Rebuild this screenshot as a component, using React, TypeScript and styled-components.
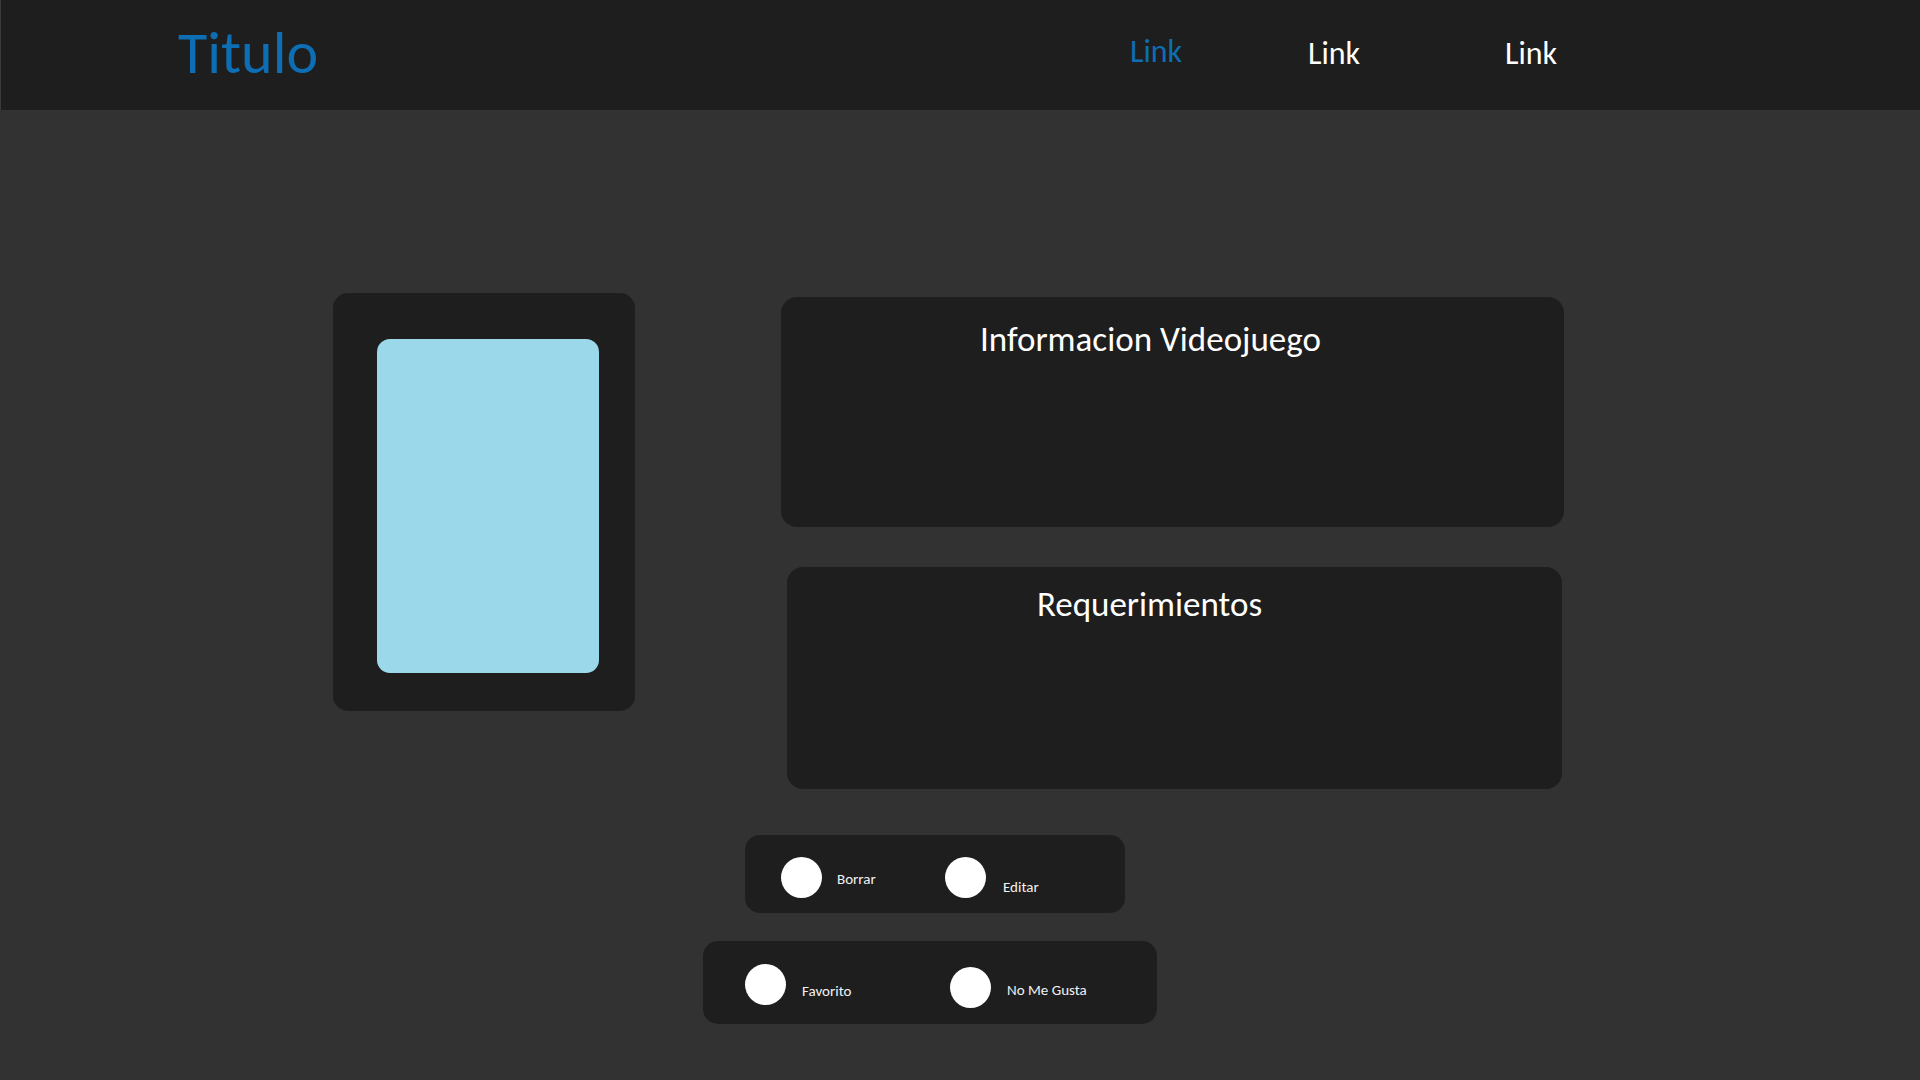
import { createGlobalStyle, styled } from "styled-components";

const GlobalStyle = createGlobalStyle`
  html, body {
    margin: 0;
    padding: 0;
    background-color: #323232;
  }
  body {
    font-family: Carlito, Lato, "Open Sans", sans-serif;
  }
`;

export default function App() {
  return (
    <>
      <GlobalStyle />
      <Page>
        <Header>
          <Brand>Titulo</Brand>
          <Nav>
            <NavLink $active $slot={178}>
              Link
            </NavLink>
            <NavLink $slot={197}>Link</NavLink>
            <NavLink $slot={56}>Link</NavLink>
          </Nav>
        </Header>

        <Main>
          <TopRow>
            <CoverCard>
              <Cover />
            </CoverCard>

            <Panels>
              <Panel $width={783} $height={230} $top={25} $right={44}>
                <PanelTitle>Informacion Videojuego</PanelTitle>
              </Panel>
              <Panel
                $width={775}
                $height={222}
                $top={20}
                $right={50}
                $indent={6}
              >
                <PanelTitle>Requerimientos</PanelTitle>
              </Panel>
            </Panels>
          </TopRow>

          <Actions>
            <ActionBar $width={380} $height={78} $padLeft={36} $padTop={22} $indent={42}>
              <ActionItem $width={164}>
                <Dot />
                <ActionLabel $gap={15} $drop={15}>
                  Borrar
                </ActionLabel>
              </ActionItem>
              <ActionItem>
                <Dot />
                <ActionLabel $gap={17} $drop={23}>
                  Editar
                </ActionLabel>
              </ActionItem>
            </ActionBar>

            <ActionBar $width={454} $height={83} $padLeft={42} $padTop={23}>
              <ActionItem $width={205}>
                <Dot />
                <ActionLabel $gap={16} $drop={20}>
                  Favorito
                </ActionLabel>
              </ActionItem>
              <ActionItem>
                <Dot $drop={3} />
                <ActionLabel $gap={16} $drop={19}>
                  No Me Gusta
                </ActionLabel>
              </ActionItem>
            </ActionBar>
          </Actions>
        </Main>
      </Page>
    </>
  );
}

const Page = styled.div`
  display: flex;
  flex-direction: column;
  width: 100%;
  min-height: 100vh;
  background-color: #323232;
`;

const Header = styled.header`
  display: flex;
  align-items: flex-start;
  height: 110px;
  padding: 0 359px 0 177px;
  background-color: #1e1e1e;
  border-left: 1px solid #3a3a3a;
  box-sizing: border-box;
`;

const Brand = styled.div`
  margin-top: 23px;
  font-size: 60px;
  line-height: 1;
  color: #0d6eb4;
`;

const Nav = styled.nav`
  display: flex;
  align-items: flex-start;
  margin-left: auto;
`;

const NavLink = styled.a<{ $active?: boolean; $slot: number }>`
  width: ${(p) => p.$slot}px;
  margin-top: ${(p) => (p.$active ? "36px" : "38px")};
  font-size: 32px;
  line-height: 1;
  white-space: nowrap;
  color: ${(p) => (p.$active ? "#0d6eb4" : "#ffffff")};
  cursor: pointer;
`;

const Main = styled.main`
  display: flex;
  flex-direction: column;
  padding: 183px 0 0 333px;
`;

const TopRow = styled.section`
  display: flex;
  align-items: flex-start;
  gap: 146px;
`;

const CoverCard = styled.div`
  width: 302px;
  height: 418px;
  padding: 46px 36px 38px 44px;
  box-sizing: border-box;
  border-radius: 15px;
  background-color: #1e1e1e;
`;

const Cover = styled.div`
  width: 100%;
  height: 100%;
  border-radius: 13px;
  background-color: #9bd9ea;
`;

const Panels = styled.div`
  display: flex;
  flex-direction: column;
  gap: 40px;
  margin-top: 4px;
`;

const Panel = styled.div<{
  $width: number;
  $height: number;
  $top: number;
  $right: number;
  $indent?: number;
}>`
  width: ${(p) => p.$width}px;
  height: ${(p) => p.$height}px;
  margin-left: ${(p) => p.$indent ?? 0}px;
  padding: ${(p) => p.$top}px ${(p) => p.$right}px 0 0;
  box-sizing: border-box;
  border-radius: 16px;
  background-color: #1e1e1e;
`;

const PanelTitle = styled.h2`
  margin: 0;
  font-size: 35px;
  font-weight: 400;
  line-height: 1;
  text-align: center;
  color: #ffffff;
`;

const Actions = styled.section`
  display: flex;
  flex-direction: column;
  align-items: flex-start;
  gap: 28px;
  margin-top: 46px;
  padding-left: 370px;
`;

const ActionBar = styled.div<{
  $width: number;
  $height: number;
  $padLeft: number;
  $padTop: number;
  $indent?: number;
}>`
  display: flex;
  align-items: flex-start;
  width: ${(p) => p.$width}px;
  height: ${(p) => p.$height}px;
  margin-left: ${(p) => p.$indent ?? 0}px;
  padding: ${(p) => p.$padTop}px 0 0 ${(p) => p.$padLeft}px;
  box-sizing: border-box;
  border-radius: 15px;
  background-color: #1e1e1e;
`;

const ActionItem = styled.div<{ $width?: number }>`
  display: flex;
  align-items: flex-start;
  width: ${(p) => (p.$width ? `${p.$width}px` : "auto")};
  cursor: pointer;
`;

const Dot = styled.span<{ $drop?: number }>`
  width: 41px;
  height: 41px;
  margin-top: ${(p) => p.$drop ?? 0}px;
  border-radius: 50%;
  background-color: #ffffff;
  flex-shrink: 0;
`;

const ActionLabel = styled.span<{ $gap: number; $drop: number }>`
  margin-left: ${(p) => p.$gap}px;
  margin-top: ${(p) => p.$drop}px;
  font-size: 15px;
  line-height: 1;
  color: #f2f2f2;
`;
